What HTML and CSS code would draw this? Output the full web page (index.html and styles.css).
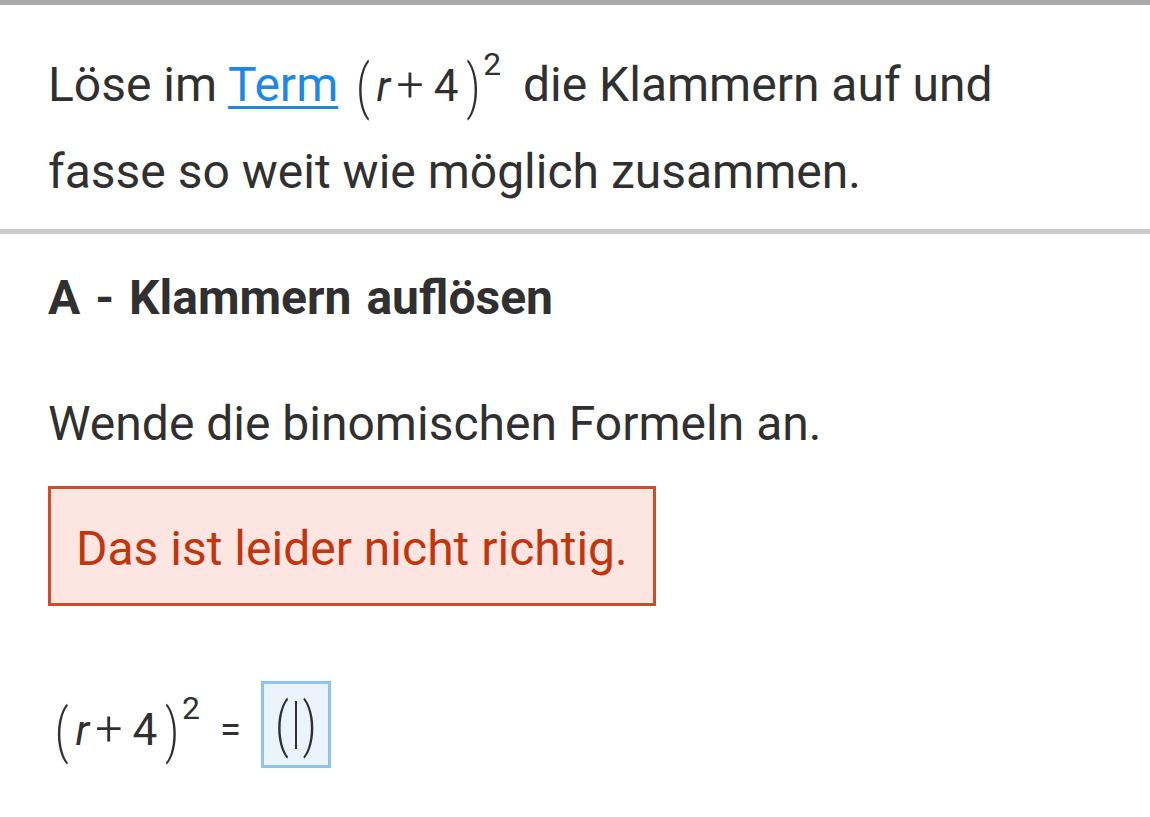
FILE: index.html
```html
<!DOCTYPE html>
<html lang="de">
<head>
  <meta charset="UTF-8" />
  <meta name="viewport" content="width=device-width, initial-scale=1.0"/>
  <title>Klammern auflösen</title>
  <link rel="stylesheet" href="styles.css">
</head>
<body>
  <div class="task">
    <p class="intro">
      Löse im <a href="#" class="term-link">Term</a>
      <span class="math"><span class="paren">(</span><i class="var">r</i><span class="op">+</span><span class="num">4</span><span class="paren close">)</span><sup class="exp">2</sup></span>
      die Klammern auf und fasse so weit wie möglich zusammen.
    </p>
  </div>

  <div class="step">
    <h2 class="step-title">A - Klammern auflösen</h2>
    <p class="hint">Wende die binomischen Formeln an.</p>
    <div class="feedback">Das ist leider nicht richtig.</div>

    <div class="equation">
      <span class="math"><span class="paren">(</span><i class="var">r</i><span class="op">+</span><span class="num">4</span><span class="paren close">)</span><sup class="exp">2</sup></span>
      <span class="equals">=</span>
      <span class="answer"><span class="paren">(</span><span class="cursor"></span><span class="paren">)</span></span>
    </div>
  </div>
</body>
</html>
```

FILE: styles.css
```css
body {
  margin: 0;
  background: #fff;
  color: #303030;
  font-family: Roboto, "Noto Sans", sans-serif;
  font-size: 48px;
}

.task {
  border-top: 5px solid #aaa;
  border-bottom: 5px solid #ccc;
  padding: 39px 48px 17px;
}

.intro {
  margin: 0;
  line-height: 81px;
}

.term-link {
  color: #1e88e5;
  text-decoration: underline;
  text-underline-offset: 5px;
  text-decoration-thickness: 3px;
}

/* inline formula */
.math {
  white-space: nowrap;
  font-size: 42px;
  font-weight: 300;
  margin-left: 6px;
}

.paren {
  display: inline-block;
  transform: scaleY(1.42);
  font-weight: 300;
  margin-right: 7px;
}

.paren.close {
  margin: 0 0 0 8px;
}

.var {
  font-style: italic;
  font-weight: 400;
}

.op {
  display: inline-block;
  font-size: 1.15em;
  font-weight: 300;
  margin: 0 10px 0 6px;
}

.num {
  font-size: 1.05em;
  font-weight: 400;
}

.exp {
  font-size: 0.76em;
  font-weight: 400;
  vertical-align: 0;
  position: relative;
  top: -0.8em;
  margin-left: 3px;
  margin-right: 10px;
}

.step {
  padding: 35px 48px;
}

.step-title {
  margin: 0 0 69px;
  font-size: 48px;
  font-weight: 700;
  word-spacing: 3px;
}

.hint {
  margin: 0 0 34px;
}

.feedback {
  display: inline-block;
  padding: 32px 25px 26px;
  line-height: 56px;
  border: 3px solid #d24a2c;
  background: #fde5e1;
  color: #c1360f;
}

.equation {
  margin-top: 75px;
  display: flex;
  align-items: center;
}

.equation .math {
  position: relative;
  top: 4px;
  margin-left: 7px;
}

.equation .exp {
  margin-right: 0;
}

.equals {
  font-size: 38px;
  margin: 10px 20px 0 20px;
}

.answer {
  display: inline-flex;
  align-items: center;
  justify-content: center;
  width: 64px;
  height: 81px;
  border: 3px solid #90c2ee;
  background: #ebf3fd;
  font-size: 42px;
}

.answer .paren {
  margin: 0;
  transform: scaleY(1.42);
}

.cursor {
  display: inline-block;
  width: 2px;
  height: 48px;
  background: #303030;
  margin: 0 6px;
}
```
